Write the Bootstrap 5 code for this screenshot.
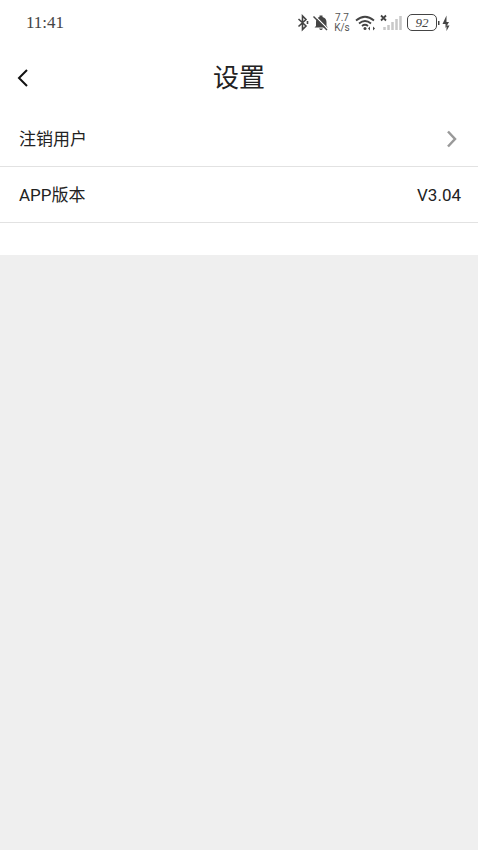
<!DOCTYPE html>
<html lang="zh-CN">
<head>
<meta charset="utf-8">
<meta name="viewport" content="width=device-width, initial-scale=1">
<title>设置</title>
<link href="https://cdn.jsdelivr.net/npm/bootstrap@5.3.0/dist/css/bootstrap.min.css" rel="stylesheet">
<style>
  body { background: #efefef; color: #222; font-family: Roboto, "Noto Sans CJK SC", sans-serif; }
  svg { display: block; flex: none; }
  .status-bar { height: 45px; padding: 0 27px 0 26px; color: #444; }
  .clock { font: 17px/20px "Liberation Serif", serif; }
  .speed { width: 18px; font-size: 10px; line-height: 10px; color: #555; }
  .battery { width: 30px; height: 17px; border: 1px solid #444; border-radius: 5px; font: italic 13px/15px "Liberation Serif", serif; }
  .title-bar { display: grid; grid-template-columns: 48px 1fr 48px; height: 66px; }
  .title-bar h1 { font-size: 26px; line-height: 40px; font-weight: 400; }
  .back { height: 48px; padding: 0 0 0 15px; color: #111; }
  .setting { height: 56px; padding: 0 17px 0 19px; border: 0; border-bottom: 1px solid #e2e2e2; border-radius: 0; font-size: 17px; line-height: 24px; color: #222; }
  .setting:hover { color: #222; border-color: #e2e2e2; }
  .sheet-end { height: 32px; }
</style>
<script src="https://cdn.jsdelivr.net/npm/bootstrap@5.3.0/dist/js/bootstrap.bundle.min.js"></script>
</head>
<body>
<div class="bg-white">
  <div class="status-bar d-flex align-items-center justify-content-between">
    <span class="clock">11:41</span>
    <div class="d-flex align-items-center">
      <svg width="12" height="18" viewBox="0 0 12 18" fill="none" stroke="currentColor" stroke-width="1.600" aria-label="蓝牙"><path d="M1.500 5 9 12 5.500 15.500V2L9 5.500 1.500 12.500M10.500 7v3"/></svg>
      <svg class="ms-1" width="16" height="18" viewBox="0 0 16 18" aria-label="静音"><path fill="currentColor" d="M1.500 13.500 3 12V8C3 5 4.500 3.500 6.500 3V1.500h3V3c2.500.5 4 2.500 4 5v4l1.500 1.500zM6 14.500h4q-2 3-4 0z"/><path d="M1.500 1.500 16 16" stroke="#fff" stroke-width="1.200"/><path d="M.5 2.500 14 16" stroke="currentColor" stroke-width="1.500"/></svg>
      <span class="speed text-center ms-1">7.7<br>K/s</span>
      <svg class="ms-1" width="20" height="18" viewBox="0 0 20 18" fill="none" stroke="currentColor" stroke-width="1.800" aria-label="无线网络"><path d="M1 6.500q9-7.500 18 0M4 9.500q6-5 12 0M7 12q3-2.500 6 0"/><circle cx="10" cy="14.500" r="1.500" fill="currentColor" stroke="none"/><path d="m13 14.500 2-2v4zM20 14.500l-2-2v4z" fill="currentColor" stroke="none"/></svg>
      <svg class="ms-1" width="24" height="18" viewBox="0 0 24 18" fill="none" aria-label="无信号"><path d="m2 1.500 5 5M7 1.500l-5 5" stroke="currentColor" stroke-width="1.800"/><path d="M5.500 16v-3M9.500 16v-5M13.500 16V8M17.500 16V5M21.500 16V2" stroke="#c8c8c8" stroke-width="2.500"/></svg>
      <span class="battery text-center ms-1">92</span>
      <svg width="14" height="18" viewBox="0 0 14 18" fill="currentColor" aria-label="充电中"><path d="M1 7h1.500v4H1zM9.500 1.500 5.500 10h3v4l3.500-6H9.500zM9.500 11.500h3L9.500 17z"/></svg>
    </div>
  </div>
  <header class="title-bar align-items-center">
    <button type="button" class="btn back border-0" aria-label="返回">
      <svg width="14" height="20" viewBox="0 0 14 20" fill="none" stroke="currentColor" stroke-width="2"><path d="M12 2 4 10l8 8"/></svg>
    </button>
    <h1 class="m-0 text-center">设置</h1>
  </header>
  <main>
    <button type="button" class="btn setting w-100 d-flex align-items-center justify-content-between">
      <span>注销用户</span>
      <svg width="18" height="20" viewBox="0 0 18 20" fill="none" stroke="#999" stroke-width="2.500"><path d="m5 2.500 7 7.500-7 7.500"/></svg>
    </button>
    <div class="setting d-flex align-items-center justify-content-between">
      <span>APP版本</span>
      <span>V3.04</span>
    </div>
    <div class="sheet-end"></div>
  </main>
</div>
</body>
</html>
